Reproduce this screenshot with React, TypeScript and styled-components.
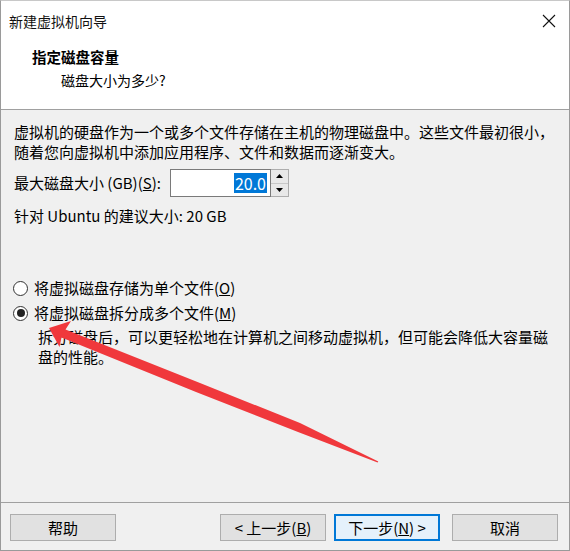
import styled, { createGlobalStyle } from "styled-components";

const GlobalStyle = createGlobalStyle`
  html, body {
    margin: 0;
    padding: 0;
    background: #ffffff;
  }
`;

const font = `"Noto Sans CJK SC", "Noto Sans", sans-serif`;

export default function App() {
  return (
    <>
      <GlobalStyle />
      <Window>
        <TitleBar>
          <span className="caption">新建虚拟机向导</span>
          <CloseIcon viewBox="0 0 14 14">
            <path d="M1 1 L13 13 M13 1 L1 13" stroke="#111" strokeWidth="1.1" />
          </CloseIcon>
        </TitleBar>

        <Header>
          <HeaderTitle>指定磁盘容量</HeaderTitle>
          <HeaderSub>磁盘大小为多少?</HeaderSub>
        </Header>

        <Body>
          <Para>
            虚拟机的硬盘作为一个或多个文件存储在主机的物理磁盘中。这些文件最初很小，
            <br />
            随着您向虚拟机中添加应用程序、文件和数据而逐渐变大。
          </Para>

          <SizeRow>
            <span>
              最大磁盘大小 (GB)(<u>S</u>):
            </span>
            <SpinBox>
              <SpinInput>
                <Selected>20.0</Selected>
              </SpinInput>
              <SpinButtons>
                <SpinButton>
                  <svg width="7" height="4" viewBox="0 0 7 4">
                    <path d="M0 4 L3.5 0 L7 4 Z" fill="#000" />
                  </svg>
                </SpinButton>
                <SpinButton>
                  <svg width="7" height="4" viewBox="0 0 7 4">
                    <path d="M0 0 L3.5 4 L7 0 Z" fill="#000" />
                  </svg>
                </SpinButton>
              </SpinButtons>
            </SpinBox>
          </SizeRow>

          <Hint>针对 Ubuntu 的建议大小: 20 GB</Hint>

          <RadioGroup>
            <RadioRow>
              <Radio $checked={false} />
              <span>
                将虚拟磁盘存储为单个文件(<u>O</u>)
              </span>
            </RadioRow>
            <RadioRow>
              <Radio $checked />
              <span>
                将虚拟磁盘拆分成多个文件(<u>M</u>)
              </span>
            </RadioRow>
            <RadioNote>
              拆分磁盘后，可以更轻松地在计算机之间移动虚拟机，但可能会降低大容量磁
              <br />
              盘的性能。
            </RadioNote>
          </RadioGroup>
        </Body>

        <Footer>
          <Button>帮助</Button>
          <Spacer />
          <Button>
            &lt; 上一步(<u>B</u>)
          </Button>
          <Button $primary>
            下一步(<u>N</u>) &gt;
          </Button>
          <Button $gap>取消</Button>
        </Footer>

        <Arrow viewBox="0 0 570 551" width="570" height="551">
          <path
            d="M49 328 L71 321 L65.5 329.5 L200 383 L300 423 L378.3 461.4 L377.6 462.6 L298 432 L196 392 L61.5 337.5 L59.5 347 Z"
            fill="#f0383c"
          />
        </Arrow>
      </Window>
    </>
  );
}

const Window = styled.div`
  position: relative;
  width: 570px;
  height: 551px;
  box-sizing: border-box;
  border: 1px solid #9a9a9a;
  border-top-color: #c8c8c8;
  display: flex;
  flex-direction: column;
  font-family: ${font};
  font-size: 15px;
  color: #000;
  overflow: hidden;
`;

const TitleBar = styled.div`
  height: 38px;
  flex: none;
  background: #fff;
  display: flex;
  align-items: center;
  justify-content: space-between;
  padding: 0 13px 0 8px;

  .caption {
    font-size: 14px;
    line-height: 20px;
    margin-top: 2px;
    color: #111;
  }
`;

const CloseIcon = styled.svg`
  width: 14px;
  height: 14px;
  margin-top: 2px;
`;

const Header = styled.div`
  height: 71px;
  flex: none;
  background: #fff;
  border-bottom: 1px solid #a0a0a0;
  padding: 8px 0 0 31px;
  box-sizing: border-box;
`;

const HeaderTitle = styled.div`
  font-size: 14.5px;
  font-weight: 700;
  line-height: 20px;
`;

const HeaderSub = styled.div`
  font-size: 14px;
  line-height: 20px;
  margin-top: 3px;
  padding-left: 29px;
`;

const Body = styled.div`
  flex: 1;
  background: #f0f0f0;
  padding: 12px 13px 0 13px;
  border-bottom: 1px solid #a0a0a0;
`;

const Para = styled.p`
  margin: 0;
  line-height: 20px;
  white-space: nowrap;
`;

const SizeRow = styled.div`
  display: flex;
  align-items: center;
  gap: 9px;
  margin-top: 7px;
  height: 28px;
  line-height: 20px;
`;

const SpinBox = styled.div`
  display: flex;
  height: 28px;
`;

const SpinInput = styled.div`
  width: 101px;
  box-sizing: border-box;
  border: 1px solid #7a7a7a;
  background: #fff;
  display: flex;
  align-items: center;
  justify-content: flex-end;
  padding-right: 3px;
`;

const Selected = styled.span`
  background: #0078d7;
  color: #fff;
  font-size: 16px;
  line-height: 20px;
  padding: 0 1px;
`;

const SpinButtons = styled.div`
  display: flex;
  flex-direction: column;
  width: 18px;
  border: 1px solid #adadad;
  border-left: none;
  box-sizing: border-box;
  background: #e8e8e8;
`;

const SpinButton = styled.div`
  flex: 1;
  display: flex;
  align-items: center;
  justify-content: center;
  & + & {
    border-top: 1px solid #c8c8c8;
  }
`;

const Hint = styled.div`
  margin-top: 9px;
  line-height: 20px;
`;

const RadioGroup = styled.div`
  margin-top: 52px;
  display: flex;
  flex-direction: column;
  gap: 5px;
`;

const RadioRow = styled.div`
  display: flex;
  align-items: center;
  gap: 6px;
  line-height: 20px;
  margin-left: -1px;
`;

const Radio = styled.span<{ $checked: boolean }>`
  width: 15px;
  height: 15px;
  box-sizing: border-box;
  border: 1px solid #333;
  border-radius: 50%;
  background: #fff;
  display: flex;
  align-items: center;
  justify-content: center;
  &::after {
    content: "";
    width: 8px;
    height: 8px;
    border-radius: 50%;
    background: ${(p) => (p.$checked ? "#222" : "transparent")};
  }
`;

const RadioNote = styled.div`
  margin-top: -1px;
  padding-left: 24px;
  line-height: 20px;
  white-space: nowrap;
`;

const Footer = styled.div`
  flex: none;
  height: 47px;
  background: #f0f0f0;
  display: flex;
  align-items: flex-start;
  padding: 11px 11px 0 9px;
  box-sizing: border-box;
  gap: 8px;
`;

const Spacer = styled.div`
  flex: 1;
`;

const Button = styled.div<{ $primary?: boolean; $gap?: boolean }>`
  width: 106px;
  height: 27px;
  box-sizing: border-box;
  border: ${(p) => (p.$primary ? "2px solid #0078d7" : "1px solid #adadad")};
  background: ${(p) => (p.$primary ? "#e5f1fb" : "#e1e1e1")};
  display: flex;
  align-items: center;
  justify-content: center;
  line-height: 20px;
  margin-left: ${(p) => (p.$gap ? "4px" : "0")};
`;

const Arrow = styled.svg`
  position: absolute;
  left: -1px;
  top: -1px;
  pointer-events: none;
`;
